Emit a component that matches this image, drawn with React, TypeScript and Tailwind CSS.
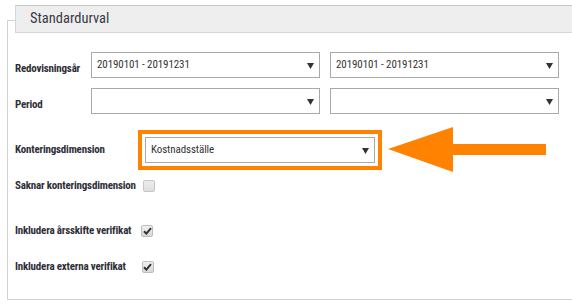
import React from "react";

function Caret() {
  return (
    <svg width="7" height="7" viewBox="0 0 7 7" className="shrink-0">
      <polygon points="0,1 7,1 3.5,7" fill="#333" />
    </svg>
  );
}

function Select({ value, w }: { value?: string; w: string }) {
  return (
    <div
      className={`${w} h-[26px] border border-[#a9a9a9] bg-white flex items-center justify-between pl-[5px] pr-[5px] text-[11px] font-normal tracking-[-0.1px] text-[#333] [font-stretch:75%]`}
    >
      <span>{value ?? ""}</span>
      <Caret />
    </div>
  );
}

function Check({ checked }: { checked: boolean }) {
  return checked ? (
    <div className="w-[12px] h-[12px] rounded-[2px] border border-[#bdbdbd] bg-gradient-to-b from-[#f0f0f0] to-[#d8d8d8] flex items-center justify-center">
      <svg width="9" height="8" viewBox="0 0 9 8">
        <path d="M1 4.2 L3.4 6.6 L8 1.2" stroke="#333" strokeWidth="2" fill="none" />
      </svg>
    </div>
  ) : (
    <div className="w-[12px] h-[12px] rounded-[2px] border border-[#c6c6c6] bg-gradient-to-b from-[#ececec] to-[#dedede]" />
  );
}

export default function App() {
  return (
    <div className="w-[572px] h-[304px] bg-white overflow-hidden pt-[20px] pl-[7px] font-['Roboto',sans-serif]">
      <div className="h-[280px] border-l border-t border-b border-[#d2d2d2]">
        <div className="-mt-[16px] ml-[7px] w-[600px] h-[28px] border border-[#d6d6d6] border-t-[#c8c8c8] bg-[#eeeeee] flex items-center pl-[14px] text-[14.5px] text-[#3a3a46] [font-stretch:75%]">
          Standardurval
        </div>

        <div className="pl-[7px] text-[11px] font-bold tracking-[-0.2px] text-[#2e2e38] [font-stretch:75%]">
          <div className="mt-[19px] flex items-start h-[26px]">
            <div className="w-[76px] pt-[10px] leading-[14px]">Redovisningsår</div>
            <div className="flex gap-[10px]">
              <Select value="20190101 - 20191231" w="w-[229px]" />
              <Select value="20190101 - 20191231" w="w-[229px]" />
            </div>
          </div>

          <div className="mt-[10px] flex items-start h-[26px]">
            <div className="w-[76px] pt-[10px] leading-[14px]">Period</div>
            <div className="flex gap-[10px]">
              <Select w="w-[229px]" />
              <Select w="w-[229px]" />
            </div>
          </div>

          <div className="mt-[16px] flex items-center h-[40px]">
            <div className="w-[123px] leading-[14px]">Konteringsdimension</div>
            <div className="w-[244px] h-[40px] border-[4px] border-[#ff8200] p-[3px]">
              <Select value="Kostnadsställe" w="w-[230px]" />
            </div>
            <svg width="158" height="46" viewBox="0 0 158 46" className="ml-[6px]">
              <polygon points="0,22 65,0 65,17 158,17 158,28 65,28 65,45" fill="#ff8200" />
            </svg>
          </div>

          <div className="mt-[8px] flex items-center h-[16px]">
            <span className="leading-[14px]">Saknar konteringsdimension</span>
            <div className="ml-[7px]">
              <Check checked={false} />
            </div>
          </div>

          <div className="mt-[29px] flex items-center h-[16px]">
            <span className="leading-[14px]">Inkludera årsskifte verifikat</span>
            <div className="ml-[10px]">
              <Check checked />
            </div>
          </div>

          <div className="mt-[20px] flex items-center h-[16px]">
            <span className="leading-[14px]">Inkludera externa verifikat</span>
            <div className="ml-[16px]">
              <Check checked />
            </div>
          </div>
        </div>
      </div>
    </div>
  );
}
